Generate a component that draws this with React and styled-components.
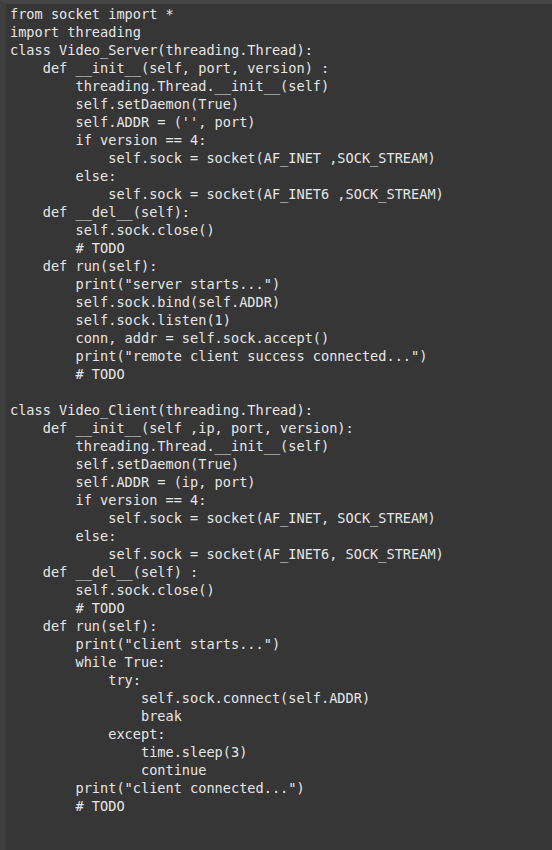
import React from "react";
import styled, { createGlobalStyle } from "styled-components";

const GlobalStyle = createGlobalStyle`
  html, body {
    margin: 0;
    padding: 0;
    background: #363636;
  }
`;

const Frame = styled.div`
  min-height: 850px;
  box-sizing: border-box;
  background: #363636;
  border-top: 4px solid #454545;
  border-left: 6px solid #3f3f3f;
  padding: 1px 0 0 4px;
`;

const Code = styled.pre`
  margin: 0;
  font-family: "DejaVu Sans Mono", "Liberation Mono", monospace;
  font-size: 13.6px;
  line-height: 18px;
  color: #e6e6e6;
  white-space: pre;
`;

const source = `from socket import *
import threading
class Video_Server(threading.Thread):
    def __init__(self, port, version) :
        threading.Thread.__init__(self)
        self.setDaemon(True)
        self.ADDR = ('', port)
        if version == 4:
            self.sock = socket(AF_INET ,SOCK_STREAM)
        else:
            self.sock = socket(AF_INET6 ,SOCK_STREAM)
    def __del__(self):
        self.sock.close()
        # TODO
    def run(self):
        print("server starts...")
        self.sock.bind(self.ADDR)
        self.sock.listen(1)
        conn, addr = self.sock.accept()
        print("remote client success connected...")
        # TODO

class Video_Client(threading.Thread):
    def __init__(self ,ip, port, version):
        threading.Thread.__init__(self)
        self.setDaemon(True)
        self.ADDR = (ip, port)
        if version == 4:
            self.sock = socket(AF_INET, SOCK_STREAM)
        else:
            self.sock = socket(AF_INET6, SOCK_STREAM)
    def __del__(self) :
        self.sock.close()
        # TODO
    def run(self):
        print("client starts...")
        while True:
            try:
                self.sock.connect(self.ADDR)
                break
            except:
                time.sleep(3)
                continue
        print("client connected...")
        # TODO`;

const App = () => {
  return (
    <>
      <GlobalStyle />
      <Frame>
        <Code>{source}</Code>
      </Frame>
    </>
  );
};

export default App;
